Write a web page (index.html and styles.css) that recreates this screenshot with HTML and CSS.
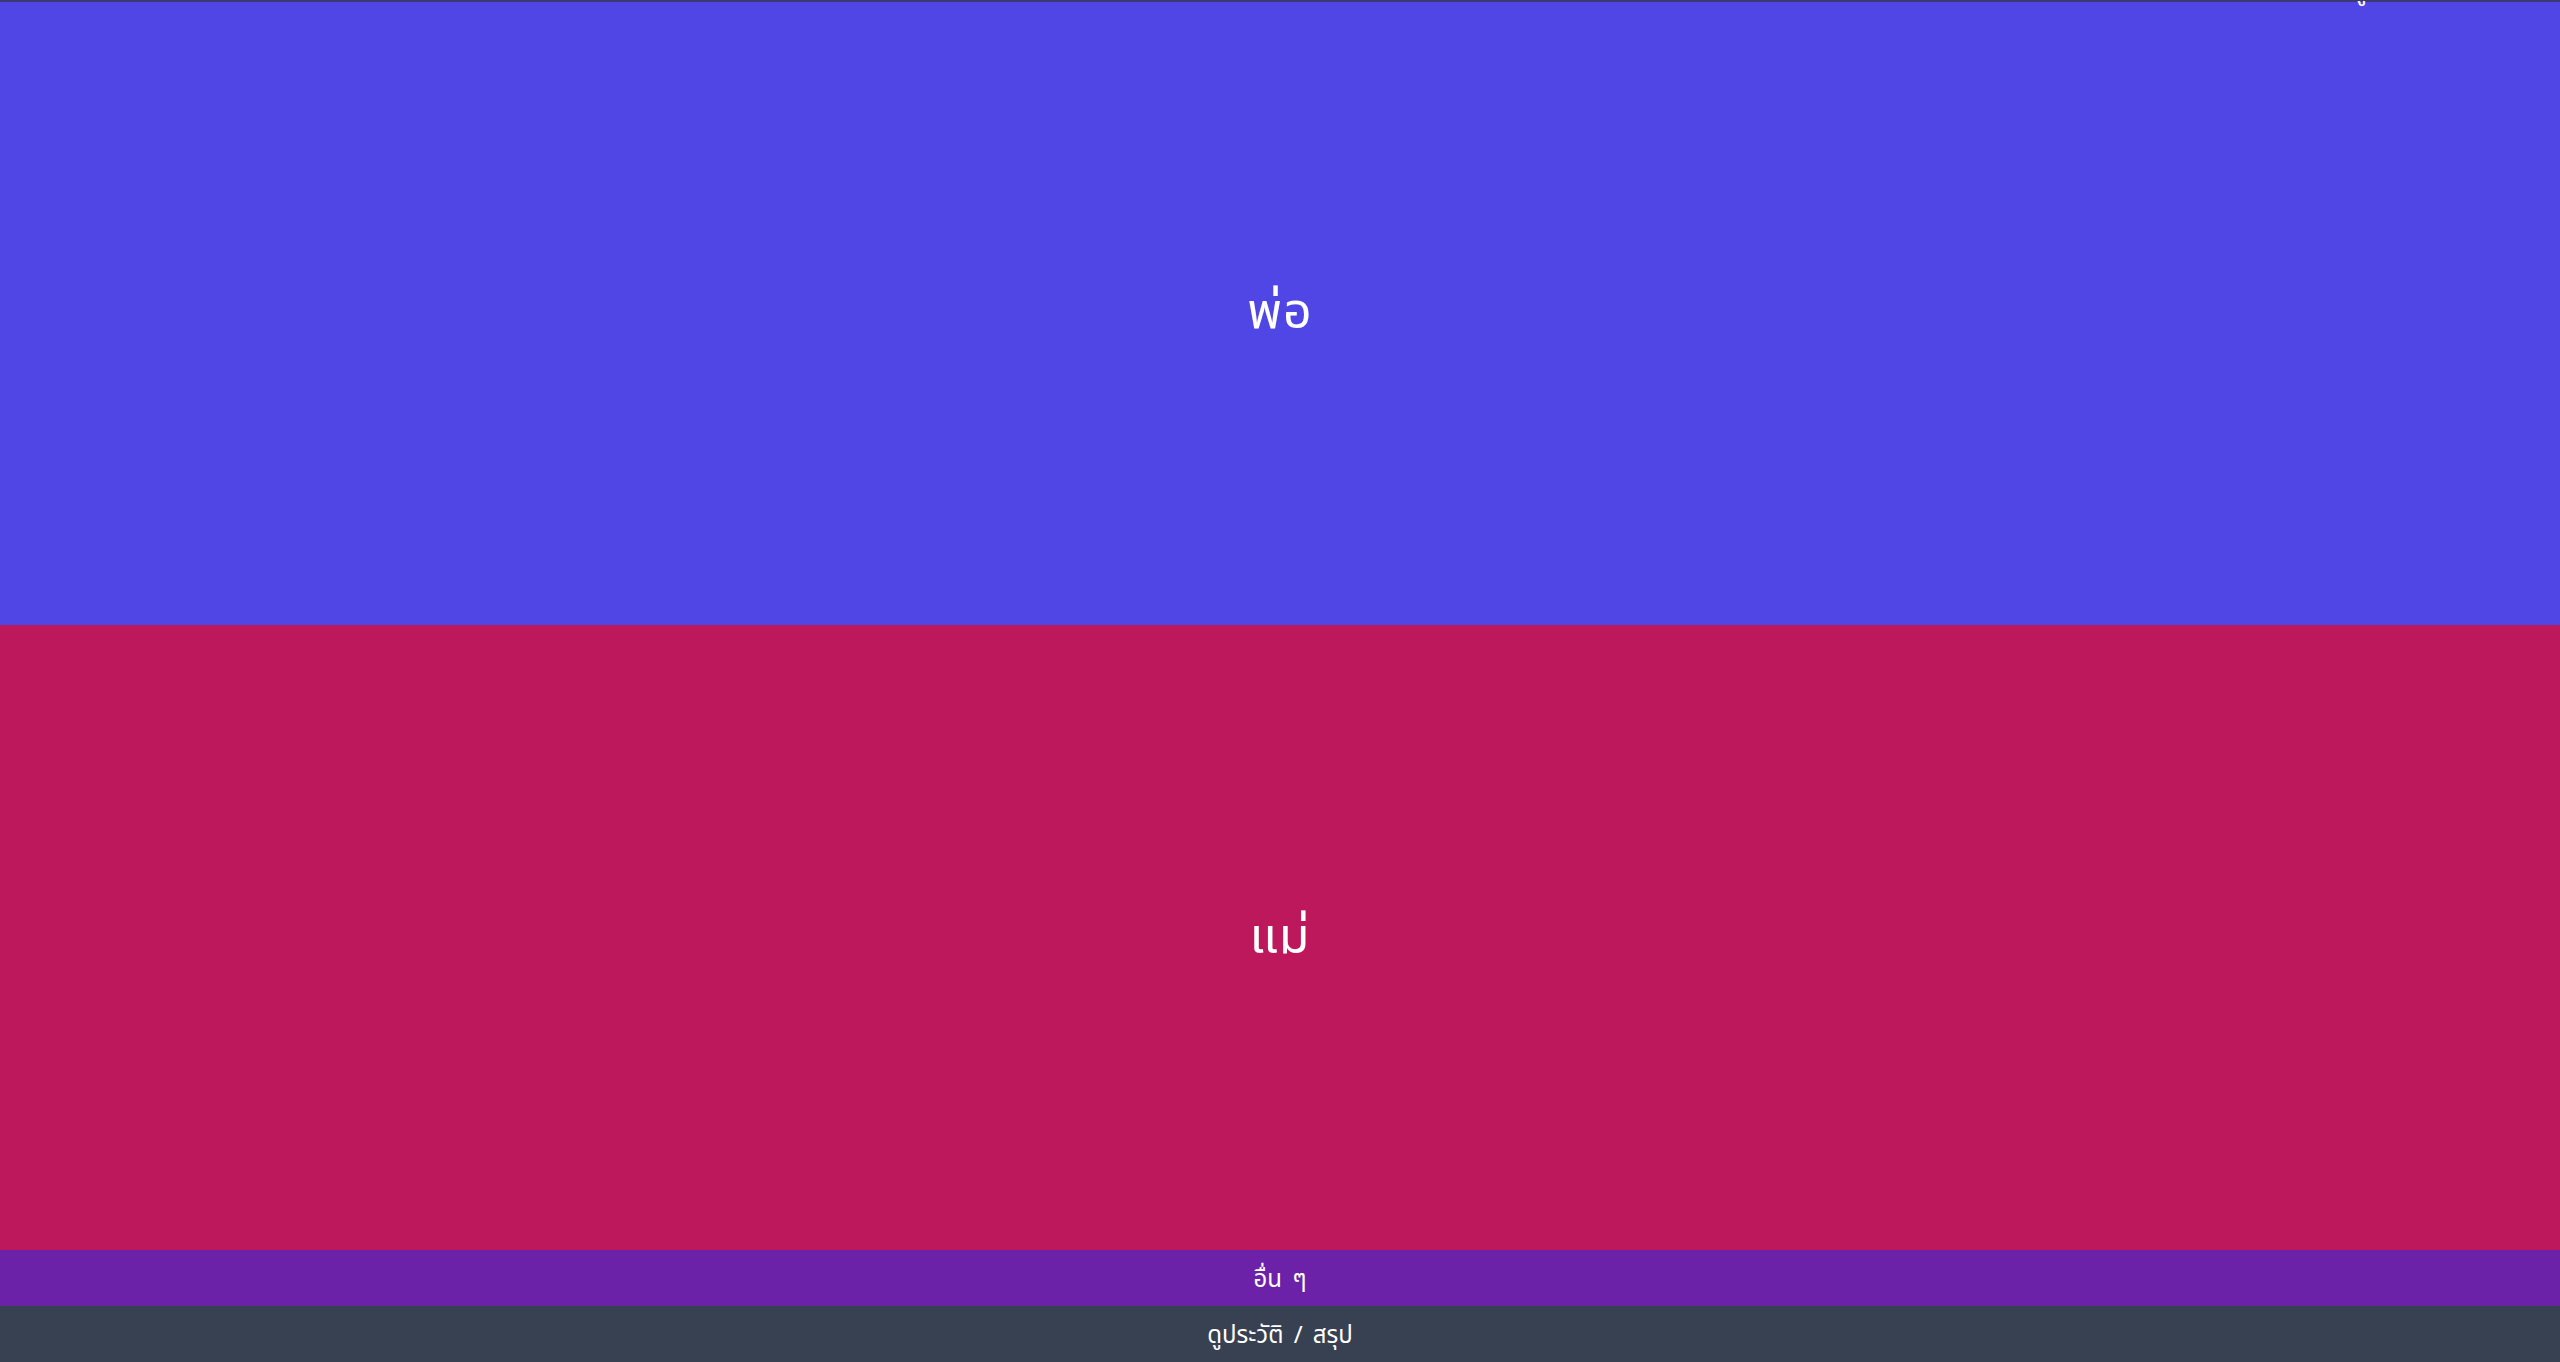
FILE: index.html
```html
<!DOCTYPE html>
<html lang="th">
<head>
<meta charset="utf-8">
<title>เลือก</title>
<link rel="stylesheet" href="styles.css">
</head>
<body>
<div class="app">
  <div class="topline"></div>
  <div class="peek">ดู</div>
  <button class="choice choice-dad">พ่อ</button>
  <button class="choice choice-mom">แม่</button>
  <button class="bar bar-other">อื่น ๆ</button>
  <button class="bar bar-history">ดูประวัติ / สรุป</button>
</div>
</body>
</html>
```
FILE: styles.css
```css
* { box-sizing: border-box; }
html, body { margin: 0; padding: 0; height: 100%; overflow: hidden; }
body { font-family: "Noto Sans", "Noto Sans Thai", sans-serif; color: #fff; }
.app {
  position: relative;
  display: flex;
  flex-direction: column;
  height: 100vh;
}
.topline {
  position: absolute;
  top: 0; left: 0; right: 0;
  height: 2px;
  background: #3b3a72;
}
.peek {
  position: absolute;
  top: -24px;
  left: 2352px;
  font-size: 24px;
  line-height: 28px;
  color: #fff;
}
button {
  border: 0;
  margin: 0;
  font-family: inherit;
  color: #fff;
  cursor: pointer;
  display: flex;
  align-items: center;
  justify-content: center;
  width: 100%;
}
.choice {
  flex: 1;
  font-size: 50px;
  letter-spacing: 1px;
}
.choice-dad { background: #4f46e5; }
.choice-mom { background: #be185d; }
.bar {
  font-size: 24px;
  line-height: 32px;
  padding: 12px 0;
  word-spacing: 4px;
}
.bar-other { background: #6b21a8; }
.bar-history { background: #374151; }
```
